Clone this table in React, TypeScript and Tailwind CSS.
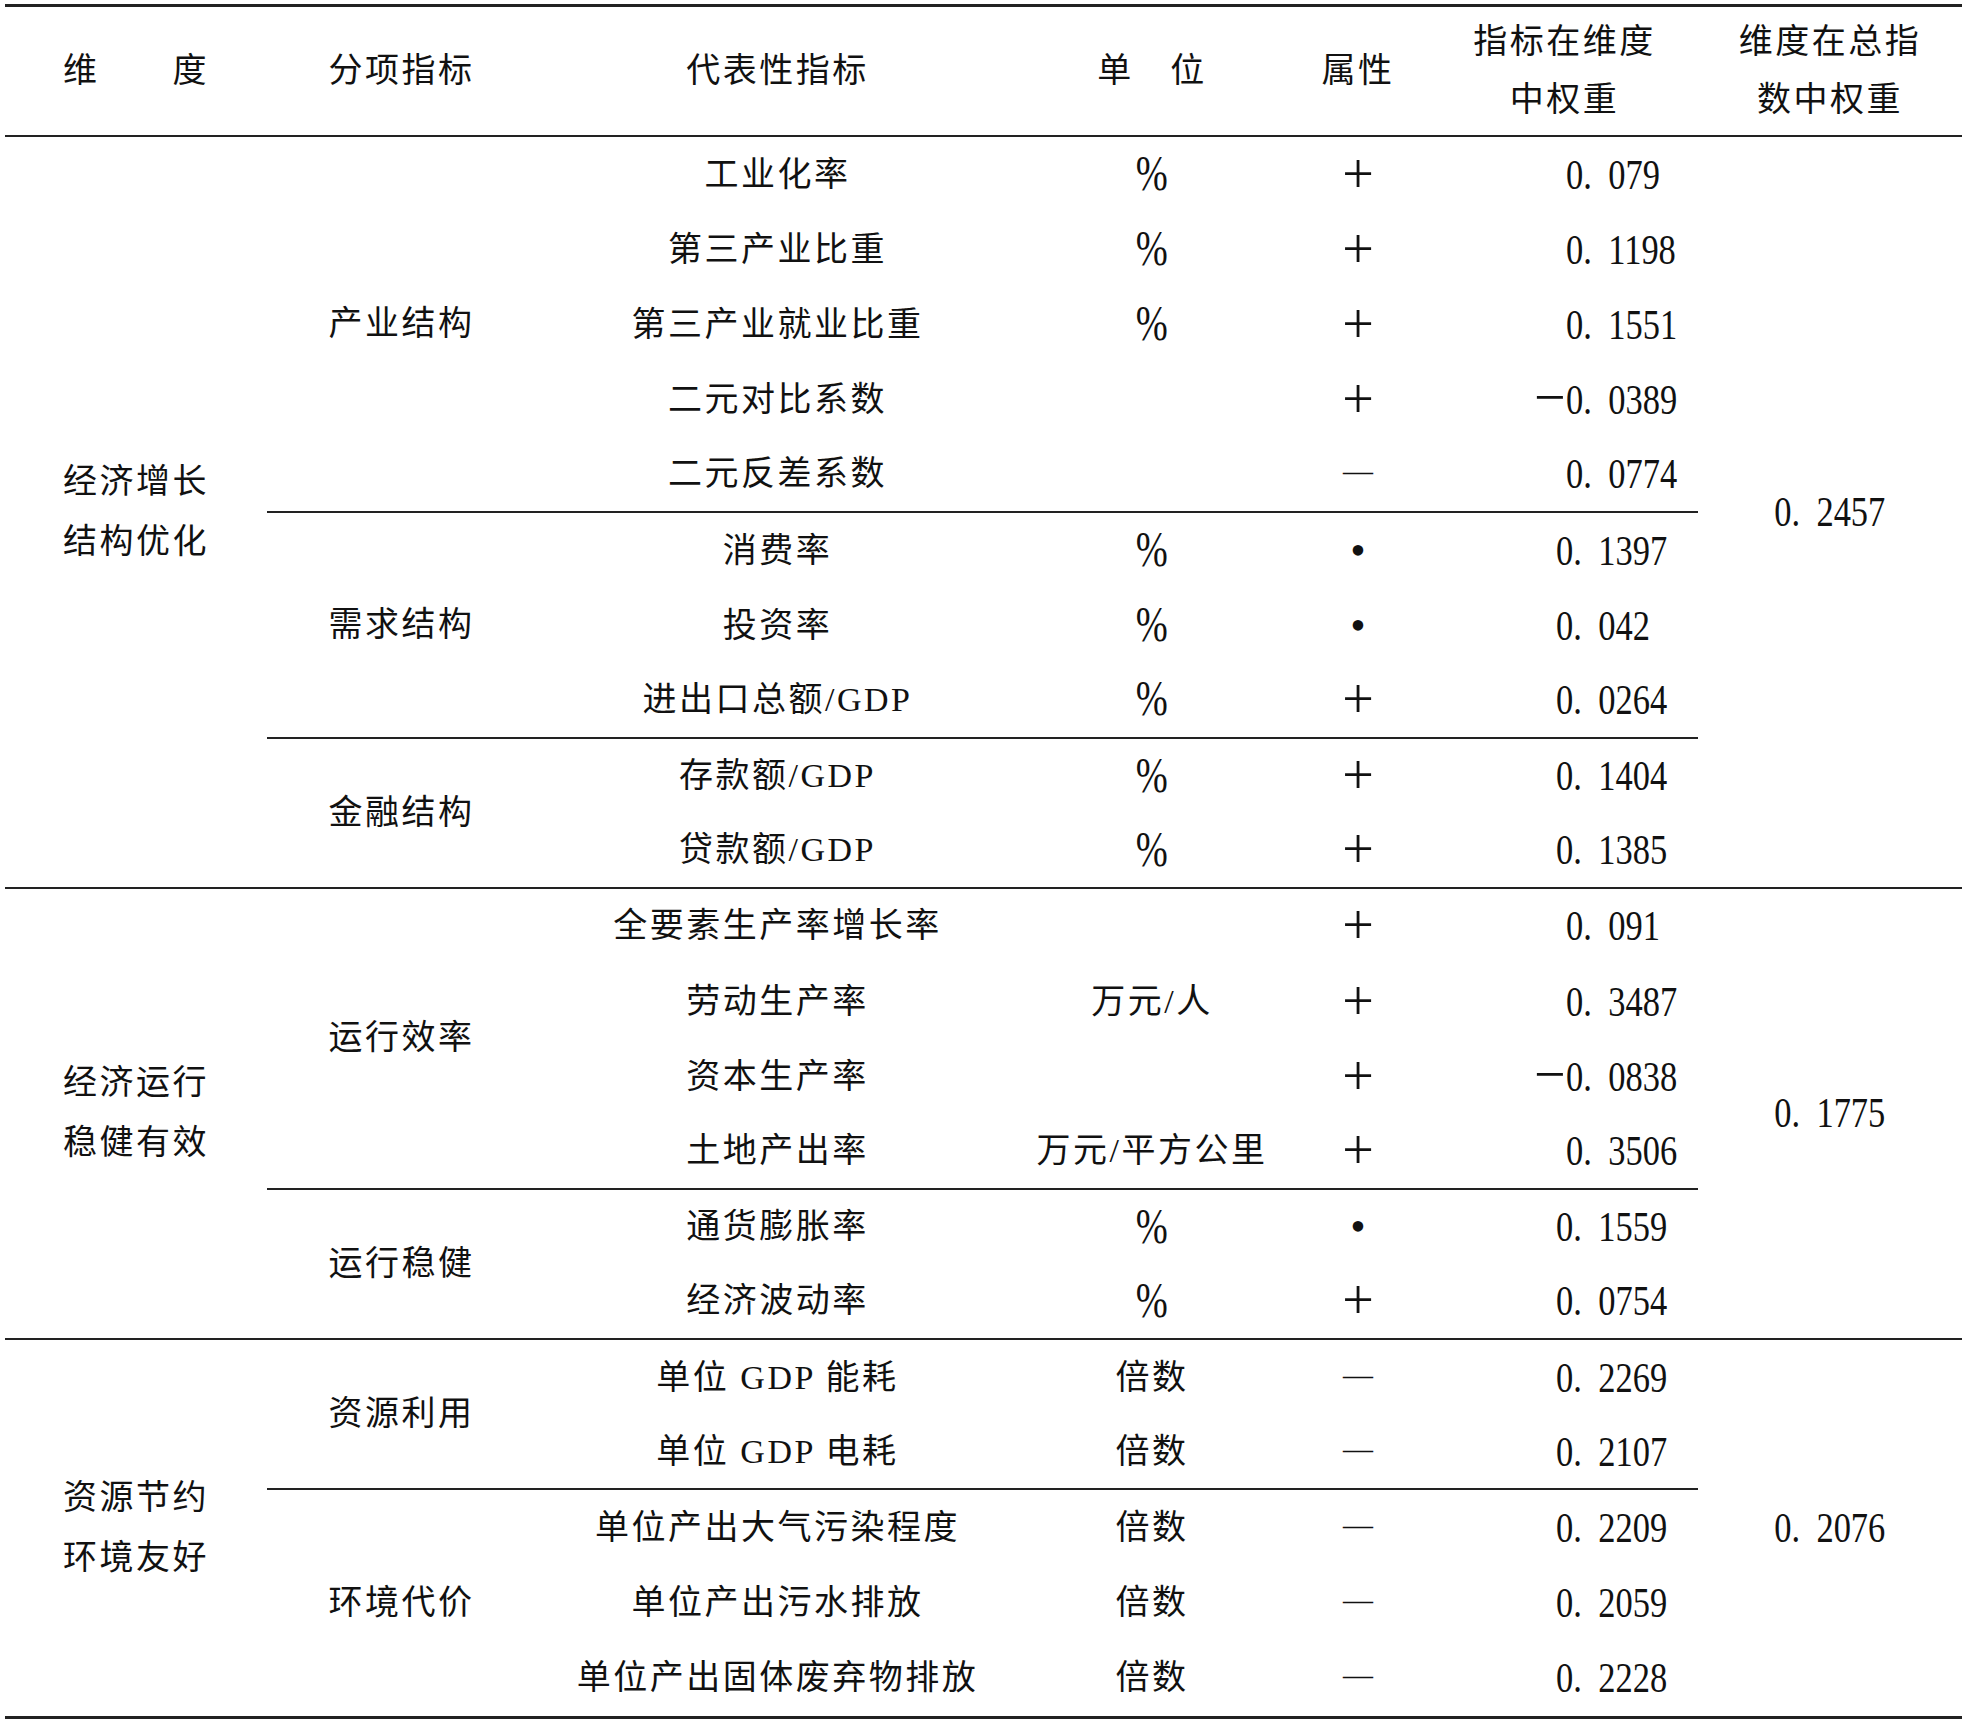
import React from "react"

type Item = [string, string, string, string]
type Sub = { name: string; span: string; pad: string; items: Item[] }
type Group = { dim: [string, string]; weight: string; span: string; subs: Sub[] }

const groups: Group[] = [
  {
    dim: ["经济增长", "结构优化"],
    weight: "0.2457",
    span: "row-span-10",
    subs: [
      {
        name: "产业结构",
        span: "row-span-5",
        pad: "pl-[135px]",
        items: [
          ["工业化率", "%", "+", "0.079"],
          ["第三产业比重", "%", "+", "0.1198"],
          ["第三产业就业比重", "%", "+", "0.1551"],
          ["二元对比系数", "", "+", "-0.0389"],
          ["二元反差系数", "", "-", "0.0774"],
        ],
      },
      {
        name: "需求结构",
        span: "row-span-3",
        pad: "pl-[125px]",
        items: [
          ["消费率", "%", "•", "0.1397"],
          ["投资率", "%", "•", "0.042"],
          ["进出口总额/GDP", "%", "+", "0.0264"],
        ],
      },
      {
        name: "金融结构",
        span: "row-span-2",
        pad: "pl-[125px]",
        items: [
          ["存款额/GDP", "%", "+", "0.1404"],
          ["贷款额/GDP", "%", "+", "0.1385"],
        ],
      },
    ],
  },
  {
    dim: ["经济运行", "稳健有效"],
    weight: "0.1775",
    span: "row-span-6",
    subs: [
      {
        name: "运行效率",
        span: "row-span-4",
        pad: "pl-[135px]",
        items: [
          ["全要素生产率增长率", "", "+", "0.091"],
          ["劳动生产率", "万元/人", "+", "0.3487"],
          ["资本生产率", "", "+", "-0.0838"],
          ["土地产出率", "万元/平方公里", "+", "0.3506"],
        ],
      },
      {
        name: "运行稳健",
        span: "row-span-2",
        pad: "pl-[125px]",
        items: [
          ["通货膨胀率", "%", "•", "0.1559"],
          ["经济波动率", "%", "+", "0.0754"],
        ],
      },
    ],
  },
  {
    dim: ["资源节约", "环境友好"],
    weight: "0.2076",
    span: "row-span-5",
    subs: [
      {
        name: "资源利用",
        span: "row-span-2",
        pad: "pl-[125px]",
        items: [
          ["单位 GDP 能耗", "倍数", "-", "0.2269"],
          ["单位 GDP 电耗", "倍数", "-", "0.2107"],
        ],
      },
      {
        name: "环境代价",
        span: "row-span-3",
        pad: "pl-[125px]",
        items: [
          ["单位产出大气污染程度", "倍数", "-", "0.2209"],
          ["单位产出污水排放", "倍数", "-", "0.2059"],
          ["单位产出固体废弃物排放", "倍数", "-", "0.2228"],
        ],
      },
    ],
  },
]

const cjk = "text-[34px] leading-none tracking-[2.5px] whitespace-nowrap"

function Num({ v, center }: { v: string; center?: boolean }) {
  const neg = v.startsWith("-")
  const body = neg ? v.slice(1) : v
  const [a, b] = body.split(".")
  return (
    <span className="inline-flex items-center">
      {neg && <span className="inline-block w-[32px] pb-[6px] text-left text-[56px] leading-none">−</span>}
      <span
        className={`inline-block scale-x-[0.82] text-[42px] leading-none whitespace-nowrap ${
          center ? "origin-center" : "origin-left"
        }`}
      >
        {a}
        <span className="mr-[20px]">.</span>
        {b}
      </span>
    </span>
  )
}

function Sign({ s }: { s: string }) {
  if (s === "+") return <span className="inline-block pb-[2px] text-[56px] leading-none">+</span>
  if (s === "-") return <span className="inline-block pb-[6px] text-[30px] leading-none">—</span>
  return <span className="inline-block text-[44px] leading-none">•</span>
}

function Unit({ u }: { u: string }) {
  if (u === "%") return <span className="inline-block pb-[3px] scale-x-[0.77] text-[50px] leading-none">%</span>
  return <span className={cjk}>{u}</span>
}

export default function App() {
  const cells: React.ReactNode[] = []

  groups.forEach((g, gi) => {
    const lastGroup = gi === groups.length - 1
    const gLine = lastGroup ? "" : "border-b-2 border-[#222]"
    g.subs.forEach((s, si) => {
      const lastSub = si === g.subs.length - 1
      const sLine = lastGroup && lastSub ? "" : "border-b-2 border-[#222]"
      s.items.forEach((it, ii) => {
        const lastRow = ii === s.items.length - 1
        const rowLine = lastRow ? sLine : ""
        const key = `${gi}-${si}-${ii}`
        if (si === 0 && ii === 0) {
          cells.push(
            <div key={key + "d"} className={`${g.span} flex flex-col items-center justify-center ${gLine}`}>
              <span className="text-[34px] leading-[60px] tracking-[2.5px]">{g.dim[0]}</span>
              <span className="text-[34px] leading-[60px] tracking-[2.5px]">{g.dim[1]}</span>
            </div>
          )
        }
        if (ii === 0) {
          cells.push(
            <div key={key + "s"} className={`${s.span} flex items-center justify-center ${sLine}`}>
              <span className={cjk}>{s.name}</span>
            </div>
          )
        }
        cells.push(
          <div key={key + "n"} className={`flex items-center justify-center ${rowLine}`}>
            <span className={cjk}>{it[0]}</span>
          </div>,
          <div key={key + "u"} className={`flex items-center justify-center ${rowLine}`}>
            {it[1] && <Unit u={it[1]} />}
          </div>,
          <div key={key + "a"} className={`flex items-center justify-center ${rowLine}`}>
            <Sign s={it[2]} />
          </div>,
          <div
            key={key + "w"}
            className={`flex items-center justify-start ${it[3].startsWith("-") ? "pl-[103px]" : s.pad} ${rowLine}`}
          >
            <Num v={it[3]} />
          </div>
        )
        if (si === 0 && ii === 0) {
          cells.push(
            <div key={key + "t"} className={`${g.span} flex items-center justify-center ${gLine}`}>
              <Num v={g.weight} center />
            </div>
          )
        }
      })
    })
  })

  return (
    <div className="w-[1968px] h-[1720px] bg-white pt-[4px] pl-[5px] text-[#111] font-['Liberation_Serif','Noto_Sans_CJK_SC',serif]">
      <div className="grid w-[1957px] grid-cols-[262px_269px_483px_266px_146px_267px_264px] grid-rows-[130px_repeat(21,75.19px)] border-t-[3px] border-b-[3px] border-[#222]">
        <div className="flex items-center justify-center border-b-2 border-[#222]">
          <span className={cjk}>维　　度</span>
        </div>
        <div className="flex items-center justify-center border-b-2 border-[#222]">
          <span className={cjk}>分项指标</span>
        </div>
        <div className="flex items-center justify-center border-b-2 border-[#222]">
          <span className={cjk}>代表性指标</span>
        </div>
        <div className="flex items-center justify-center border-b-2 border-[#222]">
          <span className={cjk}>单　位</span>
        </div>
        <div className="flex items-center justify-center border-b-2 border-[#222]">
          <span className={cjk}>属性</span>
        </div>
        <div className="flex flex-col items-center justify-center border-b-2 border-[#222]">
          <span className="text-[34px] leading-[58px] tracking-[2.5px]">指标在维度</span>
          <span className="text-[34px] leading-[58px] tracking-[2.5px]">中权重</span>
        </div>
        <div className="flex flex-col items-center justify-center border-b-2 border-[#222]">
          <span className="text-[34px] leading-[58px] tracking-[2.5px]">维度在总指</span>
          <span className="text-[34px] leading-[58px] tracking-[2.5px]">数中权重</span>
        </div>
        {cells}
      </div>
    </div>
  )
}
